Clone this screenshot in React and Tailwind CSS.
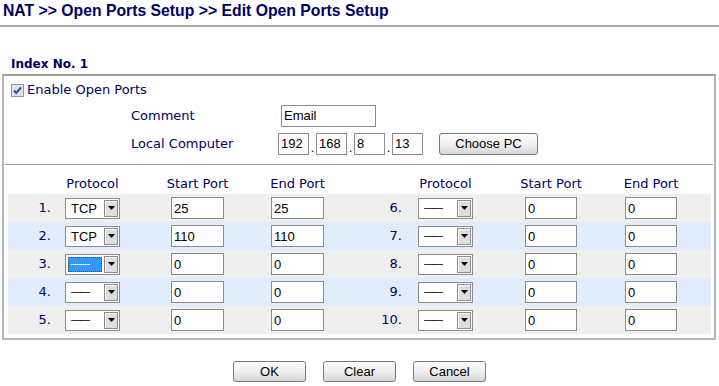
import React from "react";

const NAVY = "text-[#000066]";
const VER = "font-['DejaVu_Sans',Verdana,sans-serif]";
const ARI = "font-['Liberation_Sans',Arial,sans-serif]";

function Arrow() {
  return (
    <div className="w-[14px] h-[17px] border border-[#8c8c8c] bg-[#dedede] flex items-center justify-center shadow-[inset_1px_1px_0_#fafafa]">
      <svg width="7" height="4" viewBox="0 0 7 4">
        <path d="M0 0H7L3.5 4Z" fill="#000" />
      </svg>
    </div>
  );
}

function Sel({ value, focused }) {
  return (
    <div className={`w-[55px] h-[21px] border border-[#8c8c8c] bg-white flex items-center ${ARI} text-[13px] text-black`}>
      {focused ? (
        <div className="ml-[2px] w-[34px] h-[15px] bg-[#3399ff] border border-dotted border-[#7a3a00] flex items-center pl-[2px] text-white leading-none">
          <span className="text-[10px] tracking-[-1px]">——</span>
        </div>
      ) : (
        <div className="ml-[2px] w-[34px] h-[15px] flex items-center pl-[3px] leading-none">
          {value === "TCP" ? <span>TCP</span> : <span className="text-[10px] tracking-[-1px]">——</span>}
        </div>
      )}
      <div className="ml-auto mr-[1px]">
        <Arrow />
      </div>
    </div>
  );
}

function Inp({ value, w = "w-[53px]", h = "h-[22px]" }) {
  return (
    <div className={`${w} ${h} border border-[#8c8c8c] bg-white flex items-center pl-[2px] ${ARI} text-[13px] text-black leading-none`}>
      {value}
    </div>
  );
}

function Btn({ children, w = "w-[73px]", h = "h-[21px]" }) {
  return (
    <div className={`${w} ${h} rounded-[3px] border border-[#7a7a7a] bg-gradient-to-b from-[#fdfdfd] via-[#f0f0f0] to-[#d6d6d6] flex items-center justify-center ${ARI} text-[13px] text-black leading-none`}>
      {children}
    </div>
  );
}

const left = [
  { n: "1.", p: "TCP", s: "25", e: "25" },
  { n: "2.", p: "TCP", s: "110", e: "110" },
  { n: "3.", p: "-", s: "0", e: "0", f: true },
  { n: "4.", p: "-", s: "0", e: "0" },
  { n: "5.", p: "-", s: "0", e: "0" },
];
const right = ["6.", "7.", "8.", "9.", "10."];

function Half({ n, p, s, e, f, first }) {
  return (
    <div className="flex items-center">
      <div className={`${first ? "w-[43px]" : "w-[43px] ml-[35px]"} text-right ${VER} text-[13px] ${NAVY}`}>{n}</div>
      <div className={first ? "ml-[14px]" : "ml-[16px]"}>
        <Sel value={p} focused={f} />
      </div>
      <div className={first ? "ml-[51px]" : "ml-[52px]"}>
        <Inp value={s} w={first ? "w-[53px]" : "w-[52px]"} />
      </div>
      <div className={first ? "ml-[47px]" : "ml-[48px]"}>
        <Inp value={e} w={first ? "w-[53px]" : "w-[52px]"} />
      </div>
    </div>
  );
}

function HeadHalf({ first }) {
  return (
    <div className={`flex items-center ${VER} text-[13px] ${NAVY} whitespace-nowrap`}>
      <div className={first ? "w-[43px]" : "w-[43px] ml-[35px]"} />
      <div className={`${first ? "ml-[14px]" : "ml-[16px]"} w-[55px] flex justify-center`}>Protocol</div>
      <div className={`${first ? "ml-[51px] w-[53px]" : "ml-[52px] w-[52px]"} flex justify-center`}>Start Port</div>
      <div className={`${first ? "ml-[47px] w-[53px]" : "ml-[48px] w-[52px]"} flex justify-center`}>End Port</div>
    </div>
  );
}

export default function App() {
  return (
    <div className="w-[719px] h-[386px] bg-white overflow-hidden">
      <div className={`h-[25px] pl-[3px] pt-[2px] ${ARI} font-bold text-[15.75px] ${NAVY} leading-[18px] whitespace-nowrap`}>
        NAT &gt;&gt; Open Ports Setup &gt;&gt; Edit Open Ports Setup
      </div>
      <div className="h-[2px] bg-[#a8a8a8]" />
      <div className={`h-[47px] pl-[11px] pt-[30px] ${VER} font-bold text-[12px] ${NAVY} leading-[15px]`}>Index No. 1</div>
      <div className="ml-[2px] w-[714px] border-2 border-[#b4b4b4] border-t-[#a0a0a0]">
        <div className="h-[27px] flex items-center pl-[7px] pt-[1px]">
          <svg width="13" height="13" viewBox="0 0 13 13">
            <rect x="0.5" y="0.5" width="12" height="12" fill="#dfe4ec" stroke="#8c97a8" />
            <path d="M3 6.5L5.2 9L10 3.5" fill="none" stroke="#2c4cb4" strokeWidth="2" />
          </svg>
          <span className={`ml-[3px] ${VER} text-[13px] ${NAVY}`}>Enable Open Ports</span>
        </div>
        <div className="h-[25px] flex items-center pl-[127px]">
          <div className={`w-[146px] ${VER} text-[13px] ${NAVY}`}>Comment</div>
          <div className="ml-[4px]">
            <Inp value="Email" w="w-[95px]" />
          </div>
        </div>
        <div className="h-[31px] flex items-center pl-[127px]">
          <div className={`w-[147px] ${VER} text-[13px] ${NAVY}`}>Local Computer</div>
          <div className="flex items-end">
            <Inp value="192" w="w-[31px]" />
            <span className={`w-[7px] text-center ${ARI} text-[13px] leading-[14px]`}>.</span>
            <Inp value="168" w="w-[31px]" />
            <span className={`w-[7px] text-center ${ARI} text-[13px] leading-[14px]`}>.</span>
            <Inp value="8" w="w-[31px]" />
            <span className={`w-[7px] text-center ${ARI} text-[13px] leading-[14px]`}>.</span>
            <Inp value="13" w="w-[31px]" />
          </div>
          <div className="ml-[16px]">
            <Btn w="w-[99px]" h="h-[22px]">Choose PC</Btn>
          </div>
        </div>
        <div className="mt-[5px] mx-[1px] h-px bg-[#a0a0a0]" />
        <div className="h-[29px] flex items-center pt-[9px] ml-[4px]">
          <HeadHalf first />
          <HeadHalf />
        </div>
        <div className="ml-[4px] mr-[3px] mb-[4px]">
          {left.map((r, i) => (
            <div key={i} className={`h-[28px] flex items-center ${i % 2 === 0 ? "bg-[#efefef]" : "bg-[#e1edfd]"}`}>
              <Half {...r} first />
              <Half n={right[i]} p="-" s="0" e="0" />
            </div>
          ))}
        </div>
      </div>
      <div className="mt-[21px] flex justify-center gap-[17px]">
        <Btn>OK</Btn>
        <Btn>Clear</Btn>
        <Btn>Cancel</Btn>
      </div>
    </div>
  );
}
